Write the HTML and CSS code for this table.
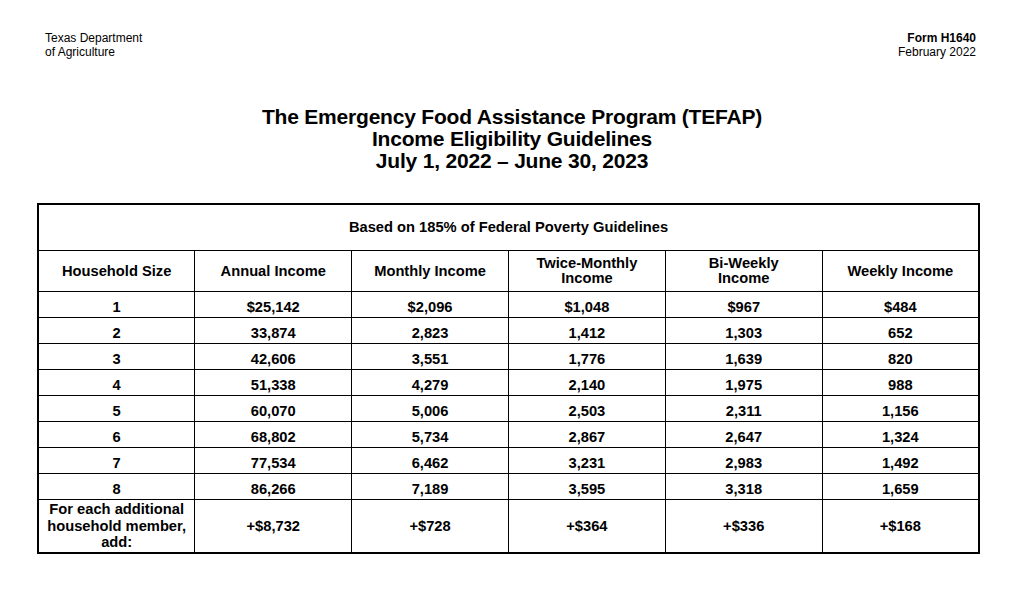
FILE: index.html
```html
<!DOCTYPE html>
<html>
<head>
<meta charset="utf-8">
<link rel="stylesheet" href="styles.css">
</head>
<body>
<div class="page">
  <div class="top">
    <div class="agency">Texas Department<br>of Agriculture</div>
    <div class="form"><b>Form H1640</b><br>February 2022</div>
  </div>
  <h1 class="title">The Emergency Food Assistance Program (TEFAP)<br>Income Eligibility Guidelines<br>July 1, 2022 – June 30, 2023</h1>
  <table class="grid">
    <tr class="sub"><td colspan="6">Based on 185% of Federal Poverty Guidelines</td></tr>
    <tr class="head">
      <td>Household Size</td><td>Annual Income</td><td>Monthly Income</td>
      <td>Twice-Monthly<br>Income</td><td>Bi-Weekly<br>Income</td><td>Weekly Income</td>
    </tr>
    <tr class="row"><td>1</td><td>$25,142</td><td>$2,096</td><td>$1,048</td><td>$967</td><td>$484</td></tr>
    <tr class="row"><td>2</td><td>33,874</td><td>2,823</td><td>1,412</td><td>1,303</td><td>652</td></tr>
    <tr class="row"><td>3</td><td>42,606</td><td>3,551</td><td>1,776</td><td>1,639</td><td>820</td></tr>
    <tr class="row"><td>4</td><td>51,338</td><td>4,279</td><td>2,140</td><td>1,975</td><td>988</td></tr>
    <tr class="row"><td>5</td><td>60,070</td><td>5,006</td><td>2,503</td><td>2,311</td><td>1,156</td></tr>
    <tr class="row"><td>6</td><td>68,802</td><td>5,734</td><td>2,867</td><td>2,647</td><td>1,324</td></tr>
    <tr class="row"><td>7</td><td>77,534</td><td>6,462</td><td>3,231</td><td>2,983</td><td>1,492</td></tr>
    <tr class="row"><td>8</td><td>86,266</td><td>7,189</td><td>3,595</td><td>3,318</td><td>1,659</td></tr>
    <tr class="extra"><td>For each additional<br>household member,<br>add:</td><td>+$8,732</td><td>+$728</td><td>+$364</td><td>+$336</td><td>+$168</td></tr>
  </table>
</div>
</body>
</html>
```
FILE: styles.css
```css
html, body {
  margin: 0;
  padding: 0;
  background: #ffffff;
}
.page {
  width: 1024px;
  height: 610px;
  font-family: "Liberation Sans", Arial, sans-serif;
  color: #000;
  padding-top: 31px;
  box-sizing: border-box;
}
.top {
  display: flex;
  justify-content: space-between;
  padding: 0 48px 0 45px;
  font-size: 12px;
  line-height: 14px;
}
.form {
  text-align: right;
}
.title {
  margin: 47px 0 0 0;
  text-align: center;
  font-size: 21px;
  line-height: 22px;
  font-weight: bold;
  letter-spacing: -0.2px;
}
.grid {
  margin: 31px 0 0 37px;
  width: 943px;
  border-collapse: collapse;
  border: 2px solid #000;
  table-layout: fixed;
  font-size: 14.7px;
  font-weight: bold;
  text-align: center;
}
.grid td {
  border: 1px solid #000;
  padding: 0;
  line-height: 15px;
}
.sub td {
  height: 45px;
}
.head td {
  height: 40px;
}
.row td {
  height: 23px;
  vertical-align: bottom;
  padding-bottom: 2px;
  line-height: 15px;
}
.extra td {
  height: 52px;
  line-height: 16.5px;
}
```
